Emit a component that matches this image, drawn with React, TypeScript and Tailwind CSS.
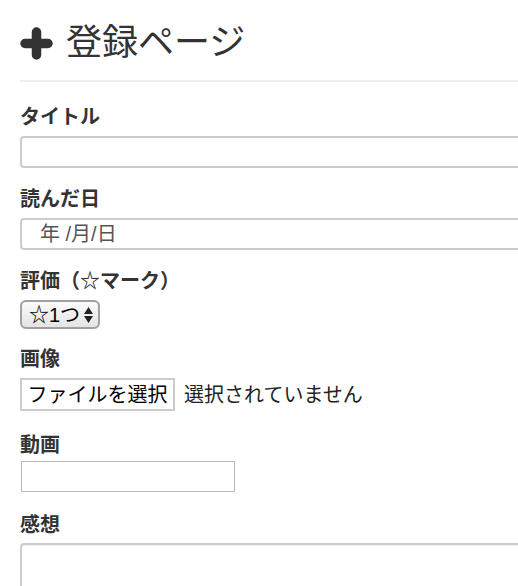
import { ReactNode } from "react"

const font = { fontFamily: '"Liberation Sans", "Noto Sans CJK JP", sans-serif' }

function Field({ label, children, className = "mb-[17px]" }: { label: string; children: ReactNode; className?: string }) {
  return (
    <div className={className}>
      <div className="mb-[5px] text-[20px] font-bold leading-[28px] text-[#333]">{label}</div>
      {children}
    </div>
  )
}

function PlusIcon() {
  return (
    <svg width="33" height="33" viewBox="0 0 33 33" className="shrink-0">
      <path d="M16.5 5v23M5 16.5h23" stroke="#333" strokeWidth="9.5" strokeLinecap="round" />
    </svg>
  )
}

export default function App() {
  return (
    <div className="h-[586px] w-[518px] overflow-hidden bg-white text-[#333]" style={font}>
      <div className="w-[540px] pl-5 pt-[23px]">
        <h1 className="flex h-10 items-center gap-[13px] text-[36px] font-normal leading-10">
          <PlusIcon />
          <span>登録ページ</span>
        </h1>

        <div className="mt-[17px] mb-[21px] h-[2px] bg-[#eee]" />

        <Field label="タイトル">
          <div className="h-8 rounded-[4px] border-2 border-[#ccc] bg-white" />
        </Field>

        <Field label="読んだ日">
          <div className="flex h-8 items-center rounded-[4px] border-2 border-[#ccc] bg-white pl-[18px] text-[20px] text-[#555]">
            年 /月/日
          </div>
        </Field>

        <Field label="評価（☆マーク）" className="mb-[16px]">
          <div className="flex h-[29px] w-20 items-center gap-[3px] rounded-[6px] border-2 border-[#a0a0a0] bg-gradient-to-b from-[#fbfbfb] to-[#e4e4e4] pl-[7px] text-[20px] text-black">
            <span>☆1つ</span>
            <svg width="11" height="18" viewBox="0 0 11 18">
              <path d="M5.5 1L10 8H1z M5.5 17L10 10H1z" fill="#222" />
            </svg>
          </div>
        </Field>

        <Field label="画像" className="mb-[20px]">
          <div className="flex items-center gap-[9px] text-[20px]">
            <div className="flex h-[33px] w-[155px] items-center justify-center border-2 border-[#ccc] bg-white text-black">
              ファイルを選択
            </div>
            <span className="text-[#222]">選択されていません</span>
          </div>
        </Field>

        <div className="mb-[19px]">
          <div className="mb-[2px] text-[20px] font-bold leading-[28px] text-[#333]">動画</div>
          <div className="ml-px h-[31px] w-[214px] border border-[#bbb] bg-white" />
        </div>

        <div>
          <div className="mb-[4px] text-[20px] font-bold leading-[28px] text-[#333]">感想</div>
          <div className="h-20 rounded-[4px] border-2 border-[#ccc] bg-white shadow-[inset_0_1px_1px_rgba(0,0,0,0.075)]" />
        </div>
      </div>
    </div>
  )
}
